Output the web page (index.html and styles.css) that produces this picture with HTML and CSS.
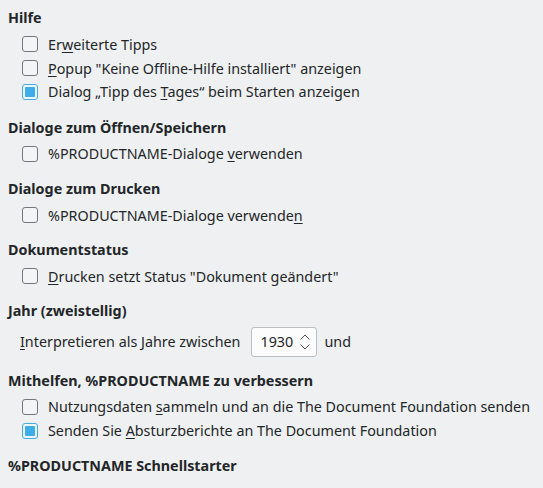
FILE: index.html
```html
<!DOCTYPE html>
<html lang="de">
<head>
  <meta charset="UTF-8" />
  <title>Allgemein</title>
  <link rel="stylesheet" href="styles.css">
</head>
<body>
  <div class="page">
    <div class="section">
      <div class="heading">Hilfe</div>
      <div class="check-row"><span class="box"></span><span>Er<u>w</u>eiterte Tipps</span></div>
      <div class="check-row"><span class="box"></span><span><u>P</u>opup "Keine Offline-Hilfe installiert" anzeigen</span></div>
      <div class="check-row"><span class="box checked"></span><span>Dialog „Tipp des <u>T</u>ages“ beim Starten anzeigen</span></div>
    </div>

    <div class="section">
      <div class="heading">Dialoge zum Öffnen/Speichern</div>
      <div class="check-row"><span class="box"></span><span>%PRODUCTNAME-Dialoge <u>v</u>erwenden</span></div>
    </div>

    <div class="section">
      <div class="heading">Dialoge zum Drucken</div>
      <div class="check-row"><span class="box"></span><span>%PRODUCTNAME-Dialoge verwende<u>n</u></span></div>
    </div>

    <div class="section">
      <div class="heading">Dokumentstatus</div>
      <div class="check-row"><span class="box"></span><span><u>D</u>rucken setzt Status "Dokument geändert"</span></div>
    </div>

    <div class="section">
      <div class="heading">Jahr (zweistellig)</div>
      <div class="spin-row">
        <span><u>I</u>nterpretieren als Jahre zwischen</span>
        <div class="spinbox">
          <span class="spin-value">1930</span>
          <svg class="spin-arrows" width="12" height="20" viewBox="0 0 12 20">
            <polyline points="1.5,7.5 6,3 10.5,7.5" fill="none" stroke="#4d4f52" stroke-width="1"/>
            <polyline points="1.5,12.5 6,17 10.5,12.5" fill="none" stroke="#4d4f52" stroke-width="1"/>
          </svg>
        </div>
        <span>und</span>
      </div>
    </div>

    <div class="section">
      <div class="heading">Mithelfen, %PRODUCTNAME zu verbessern</div>
      <div class="check-row"><span class="box"></span><span>Nutzungsdaten <u>s</u>ammeln und an die The Document Foundation senden</span></div>
      <div class="check-row"><span class="box checked"></span><span>Senden Sie <u>A</u>bsturzberichte an The Document Foundation</span></div>
    </div>

    <div class="section">
      <div class="heading">%PRODUCTNAME Schnellstarter</div>
    </div>
  </div>
</body>
</html>
```

FILE: styles.css
```css
body {
  margin: 0;
  background-color: #eff0f1;
  color: #232629;
  font-family: 'Noto Sans', sans-serif;
  font-size: 14.33px;
}
.page {
  padding: 8px 0 0 8px;
}
.section {
  margin-bottom: 13px;
}
.section:first-child {
  margin-bottom: 14px;
}
.heading {
  font-weight: bold;
  line-height: 20px;
  margin-bottom: 4.5px;
}
.check-row {
  height: 23.7px;
  display: flex;
  align-items: center;
  gap: 10px;
  padding-left: 14px;
}
.box {
  width: 16px;
  height: 16px;
  box-sizing: border-box;
  border: 1px solid #75787b;
  border-radius: 3px;
  background: #f3f4f5;
  flex-shrink: 0;
  position: relative;
}
.box.checked {
  border-color: #3daee9;
}
.box.checked::after {
  content: "";
  position: absolute;
  left: 2px;
  top: 2px;
  right: 2px;
  bottom: 2px;
  background: #3daee9;
  border-radius: 1px;
}
u {
  text-decoration: underline;
  text-underline-offset: 2px;
}
.spin-row {
  height: 32px;
  display: flex;
  align-items: center;
  gap: 7px;
  padding-left: 12px;
}
.spinbox {
  height: 30px;
  width: 66px;
  margin-left: 4px;
  box-sizing: border-box;
  border: 1px solid #bcbebf;
  border-radius: 3px;
  background: #fcfcfc;
  display: flex;
  align-items: center;
  justify-content: space-between;
  padding: 0 5px 0 8px;
}
```
